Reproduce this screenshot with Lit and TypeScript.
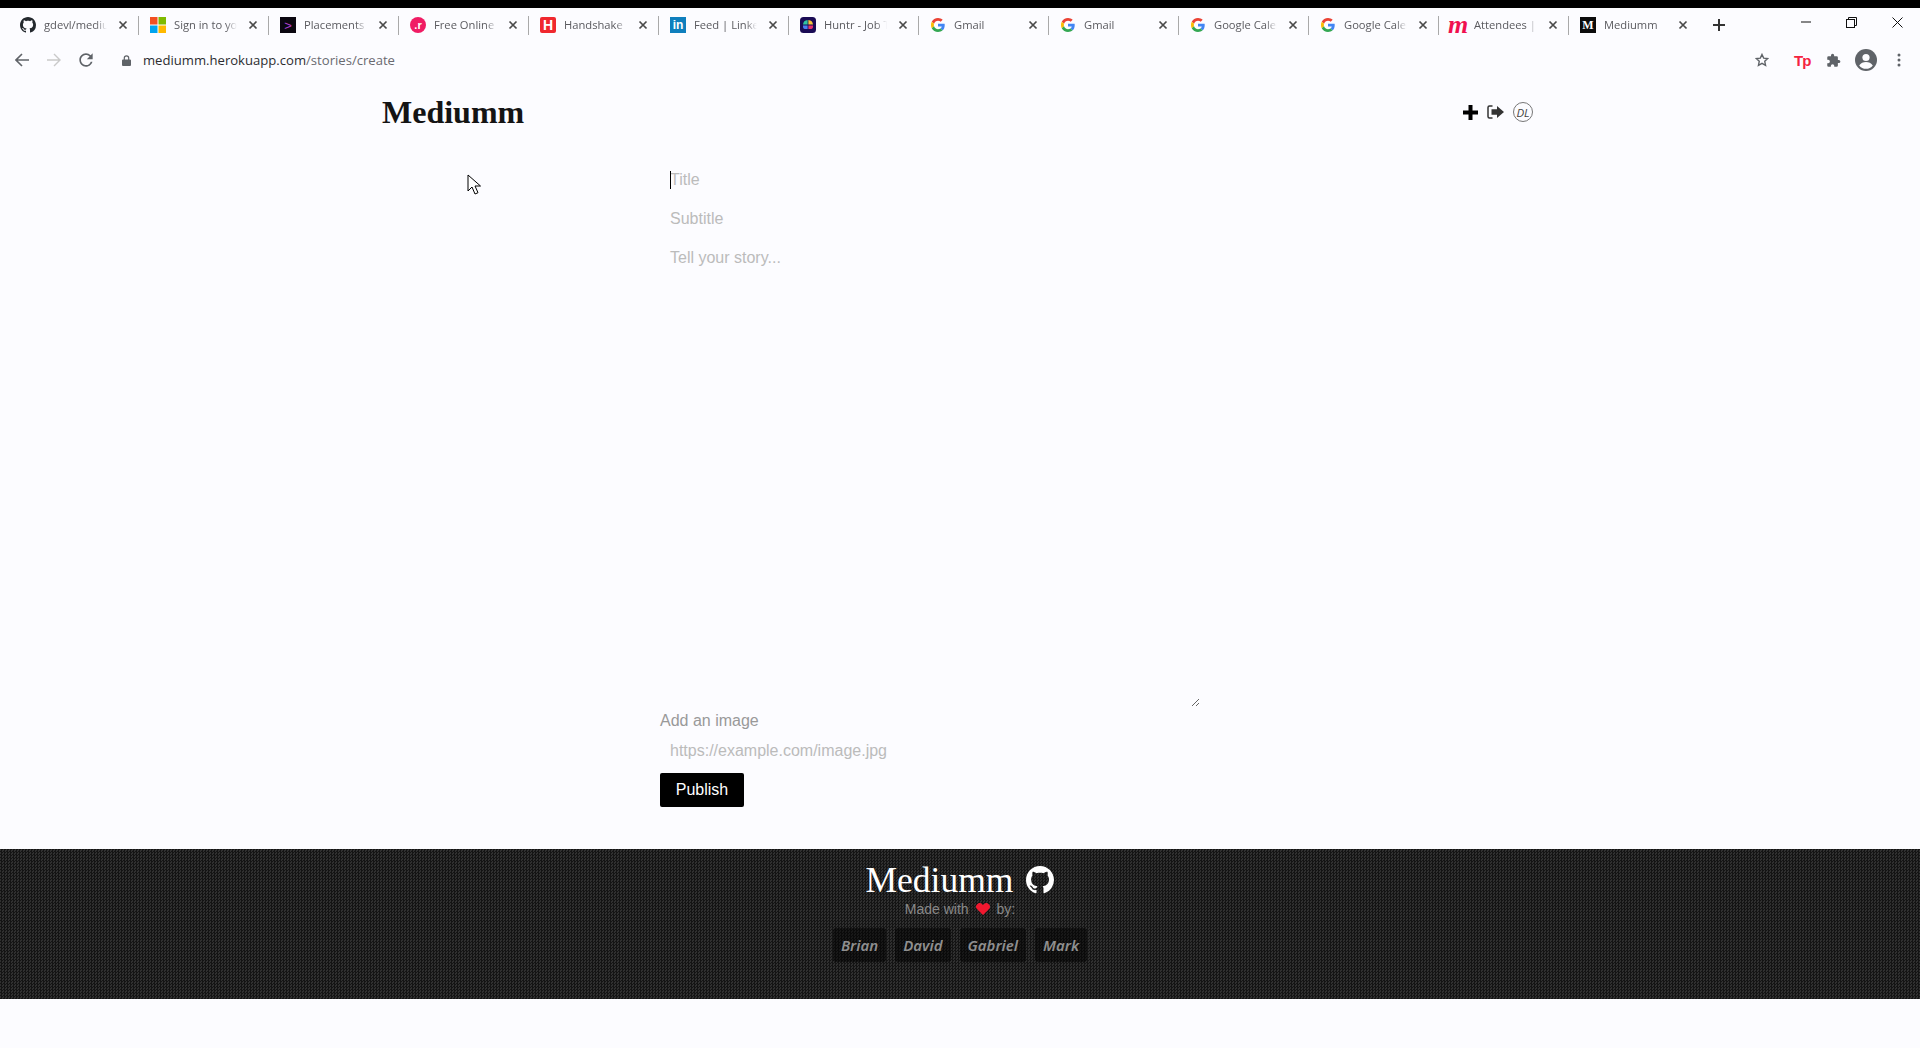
import { LitElement, html, css, svg } from 'lit';
import { customElement } from 'lit/decorators.js';

const GITHUB = 'M8 0C3.58 0 0 3.58 0 8c0 3.54 2.29 6.53 5.47 7.59.4.07.55-.17.55-.38 0-.19-.01-.82-.01-1.49-2.01.37-2.53-.49-2.69-.94-.09-.23-.48-.94-.82-1.13-.28-.15-.68-.52-.01-.53.63-.01 1.08.58 1.23.82.72 1.21 1.87.87 2.33.66.07-.52.28-.87.51-1.07-1.78-.2-3.64-.89-3.64-3.95 0-.87.31-1.59.82-2.15-.08-.2-.36-1.02.08-2.12 0 0 .67-.21 2.2.82.64-.18 1.32-.27 2-.27.68 0 1.36.09 2 .27 1.53-1.04 2.2-.82 2.2-.82.44 1.1.16 1.92.08 2.12.51.56.82 1.27.82 2.15 0 3.07-1.87 3.75-3.65 3.95.29.25.54.73.54 1.48 0 1.07-.01 1.93-.01 2.2 0 .21.15.46.55.38A8.013 8.013 0 0016 8c0-4.42-3.58-8-8-8z';

const githubIcon = (size: number, fill: string) => html`
  <svg width=${size} height=${size} viewBox="0 0 16 16"><path fill=${fill} d=${GITHUB}></path></svg>
`;

const googleIcon = html`
  <svg width="14" height="14" viewBox="0 0 48 48">
    <path fill="#EA4335" d="M24 9.5c3.54 0 6.71 1.22 9.21 3.6l6.85-6.85C35.9 2.38 30.47 0 24 0 14.62 0 6.51 5.38 2.56 13.22l7.98 6.19C12.43 13.72 17.74 9.5 24 9.5z"></path>
    <path fill="#4285F4" d="M46.98 24.55c0-1.57-.15-3.09-.38-4.55H24v9.02h12.94c-.58 2.96-2.26 5.48-4.78 7.18l7.73 6c4.51-4.18 7.09-10.36 7.09-17.65z"></path>
    <path fill="#FBBC05" d="M10.53 28.59c-.48-1.45-.76-2.99-.76-4.59s.27-3.14.76-4.59l-7.98-6.19C.92 16.46 0 20.12 0 24c0 3.88.92 7.54 2.56 10.78l7.97-6.19z"></path>
    <path fill="#34A853" d="M24 48c6.48 0 11.93-2.13 15.89-5.81l-7.73-6c-2.15 1.45-4.92 2.3-8.16 2.3-6.26 0-11.57-4.22-13.47-9.91l-7.98 6.19C6.51 42.62 14.62 48 24 48z"></path>
  </svg>
`;

const msIcon = html`
  <svg width="16" height="16" viewBox="0 0 16 16">
    <rect width="7.5" height="7.5" fill="#f25022"></rect>
    <rect x="8.5" width="7.5" height="7.5" fill="#7fba00"></rect>
    <rect y="8.5" width="7.5" height="7.5" fill="#00a4ef"></rect>
    <rect x="8.5" y="8.5" width="7.5" height="7.5" fill="#ffb900"></rect>
  </svg>
`;

const huntrIcon = html`
  <svg width="16" height="16" viewBox="0 0 16 16">
    <rect width="16" height="16" rx="3.5" fill="#1a0b55"></rect>
    <path fill="#2fc4a0" d="M3 7.6A5 5 0 0 1 7.6 3v4.6z"></path>
    <path fill="#f5c33b" d="M8.4 3A5 5 0 0 1 13 7.6H8.4z"></path>
    <path fill="#4a7bf0" d="M3 8.4h4.6V12H4.6A2 2 0 0 1 3 10z"></path>
    <path fill="#e8326f" d="M8.4 8.4H13V10a2 2 0 0 1-1.6 2h-3z"></path>
  </svg>
`;

const tabs = [
  { title: 'gdevl/medium-clone', icon: githubIcon(16, '#24292e') },
  { title: 'Sign in to your account', icon: msIcon },
  { title: 'Placements', icon: html`<span class="fav placements">&gt;</span>` },
  { title: 'Free Online', icon: html`<span class="fav free">.r</span>` },
  { title: 'Handshake', icon: html`<span class="fav handshake">H</span>` },
  { title: 'Feed | LinkedIn', icon: html`<span class="fav linkedin">in</span>` },
  { title: 'Huntr - Job Tracker', icon: huntrIcon },
  { title: 'Gmail', icon: googleIcon },
  { title: 'Gmail', icon: googleIcon },
  { title: 'Google Calendar', icon: googleIcon },
  { title: 'Google Calendar', icon: googleIcon },
  { title: 'Attendees | Meetup', icon: html`<span class="fav attendees">m</span>` },
  { title: 'Mediumm', icon: html`<span class="fav medium">M</span>`, last: true },
];

const authors = ['Brian', 'David', 'Gabriel', 'Mark'];

const closeIcon = svg`
  <svg class="close" width="10" height="10" viewBox="0 0 10 10">
    <path d="M1.5 1.5l7 7M8.5 1.5l-7 7" stroke="#4a4a4a" stroke-width="1.7" fill="none"></path>
  </svg>
`;

@customElement('app-root')
export class AppRoot extends LitElement {
  static styles = css`
    :host {
      display: block;
      position: relative;
      min-height: 100vh;
      background: #fcfcff;
      font-family: 'Liberation Sans', Arial, sans-serif;
    }
    .topline {
      height: 8px;
      background: #000;
    }

    /* browser chrome */
    .tabstrip {
      display: flex;
      align-items: center;
      height: 34px;
      padding-left: 9px;
      font-family: 'Open Sans', sans-serif;
    }
    .tab {
      display: flex;
      align-items: center;
      flex: none;
      box-sizing: border-box;
      width: 130px;
      height: 19px;
      padding: 0 10px 0 11px;
      border-right: 1px solid #a9a9a9;
    }
    .tab.last {
      border-right-color: transparent;
    }
    .favbox {
      display: flex;
      align-items: center;
      justify-content: center;
      flex: none;
      width: 16px;
      height: 16px;
      margin-right: 8px;
    }
    .fav {
      display: flex;
      align-items: center;
      justify-content: center;
      width: 16px;
      height: 16px;
      font-family: 'Liberation Sans', sans-serif;
      font-weight: 700;
      color: #fff;
    }
    .placements {
      background: #0b0710;
      color: #b040d0;
      font-size: 13px;
      font-weight: 400;
    }
    .free {
      background: #f01c64;
      border-radius: 50%;
      font-size: 11px;
    }
    .handshake {
      background: #f0282e;
      border-radius: 2px;
      font-size: 14px;
    }
    .linkedin {
      background: #0f7fbd;
      font-size: 12px;
    }
    .attendees {
      color: #f0104f;
      font-family: 'Liberation Serif', serif;
      font-style: italic;
      font-size: 26px;
      line-height: 16px;
    }
    .medium {
      background: #0c0c0c;
      font-family: 'Liberation Serif', serif;
      font-size: 12px;
    }
    .tabtitle {
      flex: 1;
      min-width: 0;
      margin-top: -1px;
      overflow: hidden;
      white-space: nowrap;
      font-size: 11.2px;
      color: #5a5a5f;
      -webkit-mask-image: linear-gradient(to right, #000 82%, transparent 100%);
      mask-image: linear-gradient(to right, #000 82%, transparent 100%);
    }
    .close {
      flex: none;
      margin-left: 11px;
    }
    .newtab {
      margin-left: 14px;
      display: flex;
    }
    .winctl {
      display: flex;
      align-items: center;
      margin-left: auto;
      gap: 35px;
      padding-right: 17px;
      height: 28px;
      align-self: flex-start;
    }
    .toolbar {
      display: flex;
      align-items: center;
      height: 36px;
      padding-left: 15px;
    }
    .nav {
      display: flex;
      align-items: center;
      gap: 18px;
    }
    .reload {
      margin: 0 -3px;
    }
    .lock {
      margin: 0 12px 0 29px;
    }
    .url {
      font-family: 'Open Sans', sans-serif;
      font-size: 13.1px;
      color: #2c2c30;
    }
    .url span {
      color: #6a6a70;
    }
    .tools {
      display: flex;
      align-items: center;
      margin-left: auto;
      padding-right: 19px;
    }
    .tp {
      margin: 0 16px 0 25px;
      width: 16px;
      font-family: 'Liberation Sans', sans-serif;
      font-size: 15px;
      font-weight: 700;
      letter-spacing: -1px;
      color: #f5233f;
    }
    .puzzle {
      margin-right: 14px;
    }
    .avatar {
      margin-right: 20px;
    }

    /* site header */
    .header {
      display: flex;
      align-items: center;
      justify-content: space-between;
      box-sizing: border-box;
      width: 1156px;
      height: 68px;
      margin: 0 auto;
    }
    .brand {
      font-family: 'Liberation Serif', serif;
      font-size: 32px;
      font-weight: 700;
      color: #141414;
    }
    .actions {
      display: flex;
      align-items: center;
      gap: 9px;
      padding-right: 5px;
    }
    .dl {
      display: flex;
      align-items: center;
      justify-content: center;
      box-sizing: border-box;
      width: 20px;
      height: 20px;
      border: 1px solid #777;
      border-radius: 50%;
      font-family: 'Open Sans', sans-serif;
      font-size: 11.5px;
      font-style: italic;
      color: #444;
    }

    /* story form */
    .form {
      position: relative;
      display: flex;
      flex-direction: column;
      align-items: flex-start;
      box-sizing: border-box;
      width: 600px;
      margin: 15px auto 0;
    }
    input,
    textarea {
      display: block;
      box-sizing: border-box;
      width: 540px;
      padding: 10px;
      border: 0;
      outline: 0;
      background: transparent;
      font-family: 'Liberation Sans', Arial, sans-serif;
      font-size: 16px;
      line-height: 18px;
    }
    input {
      height: 38px;
    }
    .titlefield {
      margin-bottom: 1px;
    }
    textarea {
      height: 468px;
      margin-top: 1px;
      resize: vertical;
    }
    input::placeholder,
    textarea::placeholder {
      color: #bbb;
      opacity: 1;
    }
    .caret {
      position: absolute;
      left: 10px;
      top: 10px;
      width: 1px;
      height: 18px;
      background: #000;
    }
    label {
      margin-top: 5px;
      font-size: 16px;
      line-height: 18px;
      color: #999;
    }
    .image {
      margin-top: 2px;
    }
    .publish {
      height: 34px;
      width: 84px;
      margin-top: 3px;
      padding: 0;
      border: 0;
      border-radius: 2px;
      background: #000;
      color: #fff;
      font-family: 'Liberation Sans', Arial, sans-serif;
      font-size: 16px;
    }

    /* footer */
    .footer {
      display: flex;
      flex-direction: column;
      align-items: center;
      box-sizing: border-box;
      height: 150px;
      margin-top: 42px;
      padding-top: 11px;
      background-color: #303030;
      background-image: conic-gradient(#141414 25%, transparent 0 50%, #141414 0 75%, transparent 0);
      background-size: 3px 3px;
    }
    .footbrand {
      display: flex;
      align-items: center;
      gap: 13px;
      height: 39px;
      font-family: 'Liberation Serif', serif;
      font-size: 35.5px;
      color: #fff;
    }
    .made {
      display: flex;
      align-items: center;
      gap: 7px;
      height: 20px;
      font-size: 14px;
      color: #888;
    }
    .chips {
      display: flex;
      gap: 9px;
      margin-top: 9px;
    }
    .chip {
      display: flex;
      align-items: center;
      height: 34px;
      padding: 0 8px;
      border-radius: 3px;
      background: rgba(0, 0, 0, 0.5);
      font-family: 'Noto Sans', sans-serif;
      font-size: 15px;
      font-style: italic;
      font-weight: 600;
      color: #8f8f8f;
    }

    .pointer {
      position: absolute;
      left: 467px;
      top: 174px;
    }
  `;

  render() {
    return html`
      <div class="topline"></div>
      <div class="tabstrip">
        ${tabs.map(
          (t) => html`
            <div class="tab ${t.last ? 'last' : ''}">
              <span class="favbox">${t.icon}</span>
              <span class="tabtitle">${t.title}</span>
              ${closeIcon}
            </div>
          `
        )}
        <span class="newtab">
          <svg width="12" height="12" viewBox="0 0 12 12"><path d="M6 0v12M0 6h12" stroke="#333" stroke-width="2"></path></svg>
        </span>
        <div class="winctl">
          <svg width="10" height="2" viewBox="0 0 10 2"><path d="M0 1h10" stroke="#111"></path></svg>
          <svg width="11" height="11" viewBox="0 0 11 11" fill="none" stroke="#111">
            <rect x=".5" y="2.5" width="8" height="8"></rect>
            <path d="M2.5 2.5v-2h8v8h-2"></path>
          </svg>
          <svg width="11" height="11" viewBox="0 0 11 11"><path d="M.5.5l10 10M10.5.5l-10 10" stroke="#111"></path></svg>
        </div>
      </div>

      <div class="toolbar">
        <div class="nav">
          <svg width="14" height="14" viewBox="0 0 14 14" fill="none" stroke="#5f6368" stroke-width="1.6"><path d="M14 7H1.5M7 1L1 7l6 6"></path></svg>
          <svg width="14" height="14" viewBox="0 0 14 14" fill="none" stroke="#c9c9c9" stroke-width="1.4"><path d="M0 7h12.5M7 1l6 6-6 6"></path></svg>
          <svg class="reload" width="20" height="20" viewBox="0 0 24 24">
            <path fill="#5f6368" d="M17.65 6.35A7.958 7.958 0 0 0 12 4c-4.42 0-7.99 3.58-7.99 8s3.57 8 7.99 8c3.73 0 6.84-2.55 7.73-6h-2.08A5.99 5.99 0 0 1 12 18c-3.31 0-6-2.69-6-6s2.69-6 6-6c1.66 0 3.14.69 4.22 1.78L13 11h7V4l-2.35 2.35z"></path>
          </svg>
        </div>
        <svg class="lock" width="9" height="11" viewBox="0 0 9 11">
          <path fill="#5f6368" d="M1 4.5h7a1 1 0 0 1 1 1V10a1 1 0 0 1-1 1H1a1 1 0 0 1-1-1V5.5a1 1 0 0 1 1-1z"></path>
          <path fill="none" stroke="#5f6368" stroke-width="1.2" d="M2.3 5V3a2.2 2.2 0 0 1 4.4 0v2"></path>
        </svg>
        <div class="url">mediumm.herokuapp.com<span>/stories/create</span></div>
        <div class="tools">
          <svg width="14" height="14" viewBox="0 0 24 24" fill="none" stroke="#5f6368" stroke-width="2.4">
            <path d="M12 2.5l2.9 6.3 6.9.8-5.1 4.7 1.4 6.8-6.1-3.4-6.100 3.400 1.400-6.800L2.200 9.600l6.900-.8z"></path>
          </svg>
          <span class="tp">Tp</span>
          <svg class="puzzle" width="15" height="15" viewBox="0 0 24 24">
            <path fill="#5f6368" d="M20.5 11H19V7a2 2 0 0 0-2-2h-4V3.500a2.500 2.500 0 0 0-5 0V5H4a2 2 0 0 0-2 2v3.800h1.500a2.700 2.700 0 0 1 0 5.400H2V20a2 2 0 0 0 2 2h3.800v-1.500a2.700 2.700 0 0 1 5.400 0V22H17a2 2 0 0 0 2-2v-4h1.500a2.500 2.500 0 0 0 0-5z"></path>
          </svg>
          <svg class="avatar" width="22" height="22" viewBox="0 0 22 22">
            <circle cx="11" cy="11" r="11" fill="#5f6368"></circle>
            <circle cx="11" cy="8.5" r="3.6" fill="#fcfcff"></circle>
            <path fill="#fcfcff" d="M4.200 16.500c1.400-2.300 4.200-3.400 6.800-3.400s5.400 1.100 6.800 3.400a8.600 8.600 0 0 1-13.600 0z"></path>
          </svg>
          <svg width="4" height="14" viewBox="0 0 4 14" fill="#5f6368">
            <circle cx="2" cy="2" r="1.5"></circle>
            <circle cx="2" cy="7" r="1.5"></circle>
            <circle cx="2" cy="12" r="1.5"></circle>
          </svg>
        </div>
      </div>

      <header class="header">
        <div class="brand">Mediumm</div>
        <div class="actions">
          <svg width="15" height="15" viewBox="0 0 15 15"><path d="M7.5 0v15M0 7.500h15" stroke="#000" stroke-width="4"></path></svg>
          <svg width="17" height="14" viewBox="0 0 17 14">
            <path fill="none" stroke="#333" stroke-width="1.5" d="M5.500 1H2.500A1.500 1.500 0 0 0 1 2.500v9A1.500 1.500 0 0 0 2.500 13h3"></path>
            <path fill="#333" d="M4.500 4.300h5.500V1L17 7l-7 6V9.700H4.500z"></path>
          </svg>
          <div class="dl">DL</div>
        </div>
      </header>

      <form class="form">
        <input class="titlefield" placeholder="Title" />
        <div class="caret"></div>
        <input placeholder="Subtitle" />
        <textarea placeholder="Tell your story..."></textarea>
        <label>Add an image</label>
        <input class="image" placeholder="https://example.com/image.jpg" />
        <button class="publish" type="button">Publish</button>
      </form>

      <footer class="footer">
        <div class="footbrand">Mediumm ${githubIcon(28, '#fff')}</div>
        <div class="made">
          Made with
          <svg width="14" height="12" viewBox="0 0 14 12"><path fill="#f0182f" d="M7 12L1.200 6.200A3.500 3.500 0 0 1 6.200 1.200L7 2l.8-.8a3.500 3.500 0 0 1 5 5z"></path></svg>
          by:
        </div>
        <div class="chips">${authors.map((a) => html`<div class="chip">${a}</div>`)}</div>
      </footer>

      <svg class="pointer" width="14" height="21" viewBox="0 0 14 21">
        <path fill="#fff" stroke="#000" d="M1 1v16l4-4 3 7 3-1.300-3-6.700h5.500z"></path>
      </svg>
    `;
  }
}
